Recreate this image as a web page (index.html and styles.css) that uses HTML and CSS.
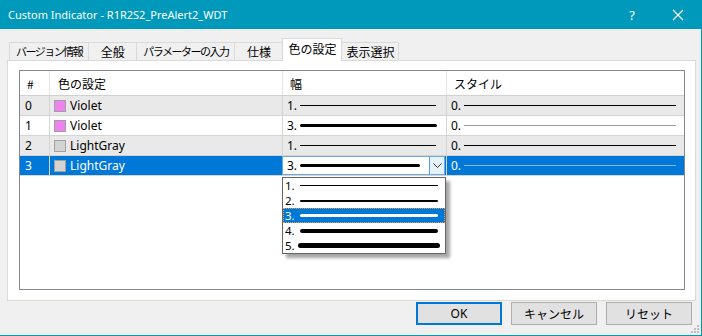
FILE: index.html
```html
<!DOCTYPE html>
<html lang="ja">
<head>
  <meta charset="UTF-8" />
  <title>Custom Indicator</title>
  <link rel="stylesheet" href="styles.css">
</head>
<body>
  <div class="window">
    <div class="titlebar">
      <span class="title">Custom Indicator - R1R2S2_PreAlert2_WDT</span>
      <span class="help">?</span>
      <span class="close">
        <svg width="12" height="12" viewBox="0 0 12 12"><path d="M1 1L11 11M11 1L1 11" stroke="#fff" stroke-width="1.1" fill="none"/></svg>
      </span>
    </div>

    <div class="tabs">
      <div class="tab first kana">バージョン情報</div>
      <div class="tab">全般</div>
      <div class="tab kana">パラメーターの入力</div>
      <div class="tab">仕様</div>
      <div class="tab active">色の設定</div>
      <div class="tab">表示選択</div>
    </div>

    <div class="panel">
      <div class="grid">
        <div class="row head">
          <div class="cell c-num">#</div>
          <div class="cell c-color">色の設定</div>
          <div class="cell c-width">幅</div>
          <div class="cell c-style">スタイル</div>
        </div>

        <div class="row alt">
          <div class="cell c-num">0</div>
          <div class="cell c-color"><span class="swatch violet"></span>Violet</div>
          <div class="cell c-width"><span class="val">1.</span><span class="line w1"></span></div>
          <div class="cell c-style"><span class="val">0.</span><span class="line s-dark"></span></div>
        </div>

        <div class="row">
          <div class="cell c-num">1</div>
          <div class="cell c-color"><span class="swatch violet"></span>Violet</div>
          <div class="cell c-width"><span class="val">3.</span><span class="line w3"></span></div>
          <div class="cell c-style"><span class="val">0.</span><span class="line s-light"></span></div>
        </div>

        <div class="row alt">
          <div class="cell c-num">2</div>
          <div class="cell c-color"><span class="swatch lightgray"></span>LightGray</div>
          <div class="cell c-width"><span class="val">1.</span><span class="line w1"></span></div>
          <div class="cell c-style"><span class="val">0.</span><span class="line s-dark"></span></div>
        </div>

        <div class="row selected">
          <div class="cell c-num">3</div>
          <div class="cell c-color"><span class="swatch lightgray"></span>LightGray</div>
          <div class="cell c-width combo-cell">
            <div class="combo">
              <span class="val">3.</span><span class="line w3 combo-line"></span>
              <span class="combo-btn">
                <svg width="9" height="5" viewBox="0 0 9 5"><path d="M0.5 0.5L4.5 4.5L8.5 0.5" stroke="#333" stroke-width="1" fill="none"/></svg>
              </span>
            </div>
            <div class="droplist">
              <div class="item"><span class="val">1.</span><span class="line d1"></span></div>
              <div class="item"><span class="val">2.</span><span class="line d2"></span></div>
              <div class="item current"><span class="val">3.</span><span class="line d3"></span></div>
              <div class="item"><span class="val">4.</span><span class="line d4"></span></div>
              <div class="item"><span class="val">5.</span><span class="line d5"></span></div>
            </div>
          </div>
          <div class="cell c-style"><span class="val">0.</span><span class="line s-sel"></span></div>
        </div>
      </div>
    </div>

    <div class="buttons">
      <button class="btn default">OK</button>
      <button class="btn">キャンセル</button>
      <button class="btn">リセット</button>
    </div>

    <svg class="grip" width="10" height="10" viewBox="0 0 10 10">
      <rect x="7" y="1" width="2" height="2" fill="#bdbdbd"/>
      <rect x="4" y="4" width="2" height="2" fill="#bdbdbd"/>
      <rect x="7" y="4" width="2" height="2" fill="#bdbdbd"/>
      <rect x="1" y="7" width="2" height="2" fill="#bdbdbd"/>
      <rect x="4" y="7" width="2" height="2" fill="#bdbdbd"/>
      <rect x="7" y="7" width="2" height="2" fill="#bdbdbd"/>
    </svg>
  </div>
</body>
</html>
```

FILE: styles.css
```css
:root {
  --teal: #0099bc;
  --select: #0078d7;
  --tab-border: #d9d9d9;
  --grid-border: #828790;
}

body {
  margin: 0;
  background: #f0f0f0;
  font-family: "Noto Sans", "Noto Sans CJK JP", sans-serif;
  font-size: 12px;
  color: #000;
}

.window {
  position: relative;
  width: 702px;
  height: 336px;
  box-sizing: border-box;
  border-right: 1px solid var(--teal);
  border-bottom: 1px solid var(--teal);
  display: flex;
  flex-direction: column;
}

.titlebar {
  height: 29px;
  background: var(--teal);
  color: #fff;
  display: flex;
  align-items: center;
  padding-left: 8px;
}

.title {
  flex: 1;
  font-size: 11px;
}

.help {
  width: 46px;
  text-align: center;
  font-size: 13px;
}

.close {
  width: 46px;
  display: flex;
  justify-content: center;
}

/* tabs */
.tabs {
  height: 32px;
  margin-bottom: -1px;
  padding-left: 9px;
  display: flex;
  align-items: flex-end;
  font-family: "Noto Sans CJK JP", sans-serif;
}

.tab {
  min-width: 48px;
  box-sizing: border-box;
  height: 19px;
  line-height: 17px;
  padding: 0 4px;
  border-top: 1px solid var(--tab-border);
  border-right: 1px solid var(--tab-border);
  background: #f0f0f0;
  text-align: center;
  white-space: nowrap;
}

.tab.kana {
  font-size: 11px;
  letter-spacing: -1.5px;
  padding: 0 6px;
}

.tab.first {
  border-left: 1px solid var(--tab-border);
}

.tab.active {
  position: relative;
  z-index: 1;
  height: 23px;
  line-height: 20px;
  padding: 0 5px;
  margin-left: -1px;
  border-left: 1px solid var(--tab-border);
  background: #fff;
}

.panel {
  margin: 0 5px 0 7px;
  height: 241px;
  box-sizing: border-box;
  border: 1px solid var(--tab-border);
  background: #fff;
  padding: 9px 10px 10px 11px;
}

/* grid */
.grid {
  height: 220px;
  box-sizing: border-box;
  border: 1px solid var(--grid-border);
  background: #fff;
}

.row {
  display: grid;
  grid-template-columns: 30px 233px 164px 237px;
  height: 20px;
  border-bottom: 1px solid #d4d4d4;
  box-sizing: border-box;
}

.row.head {
  height: 25px;
  border-bottom-color: #d0d0d0;
}

.row.alt {
  background: #e9e9e9;
}

.cell {
  display: flex;
  align-items: center;
  border-right: 1px solid #d4d4d4;
  padding-left: 4px;
  white-space: nowrap;
}

.cell:last-child {
  border-right: none;
}

.head .cell {
  border-right-color: #e5e5e5;
  padding-left: 7px;
  font-family: "Noto Sans CJK JP", sans-serif;
}

.head .c-color {
  padding-left: 8px;
}

.c-num {
  padding-left: 5px;
}

.swatch {
  width: 10px;
  height: 10px;
  border: 1px solid #a0a0a0;
  margin-right: 4px;
  flex: none;
}

.swatch.violet {
  background: #ee82ee;
}

.swatch.lightgray {
  background: #d3d3d3;
}

.val {
  width: 13px;
  flex: none;
}

.line {
  display: block;
  height: 1px;
  background: #000;
}

.c-width .line {
  width: 136px;
}

.c-width .line.w3 {
  height: 3px;
  border-radius: 2px;
  width: 137px;
}

.c-style .line {
  width: 212px;
}

.s-dark {
  background: #000;
}

.s-light {
  background: #9a9a9a !important;
}

.selected {
  background: var(--select);
  color: #fff;
}

.selected .s-sel {
  background: #86b9e8;
}

/* combo in selected row */
.combo-cell {
  position: relative;
  padding: 0;
}

.combo {
  width: 100%;
  height: 100%;
  box-sizing: border-box;
  border: 1px solid #6fa8dc;
  background: #fff;
  color: #000;
  display: flex;
  align-items: center;
  padding-left: 4px;
  margin-left: -1px;
}

.combo .line.combo-line {
  width: 120px;
}

.combo-btn {
  margin-left: auto;
  width: 15px;
  height: 100%;
  box-sizing: border-box;
  border-left: 1px solid #569de5;
  background: #e5f1fb;
  display: flex;
  align-items: center;
  justify-content: center;
}

.droplist {
  position: absolute;
  left: -1px;
  top: 21px;
  width: 164px;
  box-sizing: border-box;
  border: 1px solid #646464;
  background: #fff;
  color: #000;
  box-shadow: 4px 4px 3px rgba(0, 0, 0, 0.35);
  z-index: 2;
}

.item {
  height: 15px;
  line-height: 14px;
  display: flex;
  align-items: center;
  padding-left: 2px;
  box-sizing: border-box;
  font-size: 11.5px;
}

.item .val {
  width: 15px;
}

.item .line {
  width: 138px;
  border-radius: 3px;
}

.item .d2 { height: 2px; }
.item .d3 { height: 3px; }
.item .d4 { height: 4px; }
.item .d5 { height: 5px; width: 142px; margin-left: -2px; }

.item.current {
  background: var(--select);
  color: #fff;
  outline: 1px dotted #f0a040;
  outline-offset: -1px;
}

.item.current .line {
  background: #fff;
}

/* buttons */
.buttons {
  display: flex;
  justify-content: flex-end;
  gap: 9px;
  margin-top: 1px;
  padding-right: 9px;
}

.btn {
  width: 86px;
  height: 23px;
  font-family: "Noto Sans", "Noto Sans CJK JP", sans-serif;
  font-size: 12px;
  background: #e1e1e1;
  border: 1px solid #adadad;
  color: #000;
  padding: 0;
}

.btn.default {
  border: 2px solid var(--select);
}

.grip {
  position: absolute;
  right: 1px;
  bottom: 1px;
}
```
